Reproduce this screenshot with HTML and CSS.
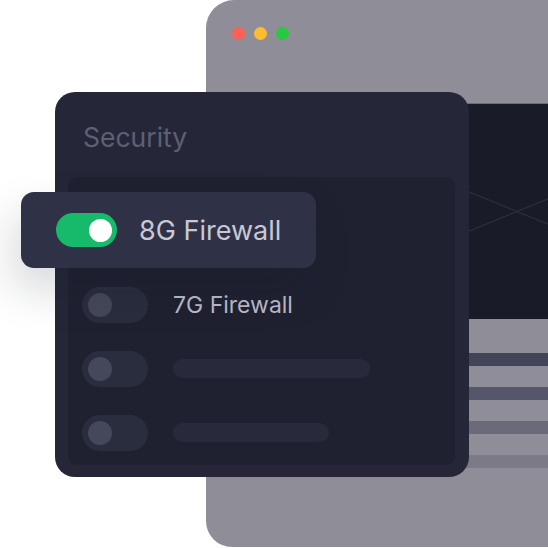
FILE: index.html
```html
<!DOCTYPE html>
<html lang="en">
<head>
<meta charset="utf-8">
<title>Security</title>
<link rel="stylesheet" href="styles.css">
</head>
<body>
<div class="stage">
  <div class="browser">
    <div class="browser-bar">
      <span class="dot dot-red"></span>
      <span class="dot dot-yellow"></span>
      <span class="dot dot-green"></span>
    </div>
    <div class="browser-body">
      <div class="hero">
        <svg class="hero-x" viewBox="0 0 526 216" preserveAspectRatio="none">
          <line x1="0" y1="0" x2="526" y2="216"/>
          <line x1="0" y1="216" x2="526" y2="0"/>
        </svg>
      </div>
      <div class="stripes">
        <div class="stripe stripe-1"></div>
        <div class="stripe stripe-2"></div>
        <div class="stripe stripe-3"></div>
        <div class="stripe stripe-4"></div>
      </div>
    </div>
  </div>

  <div class="panel">
    <h2 class="panel-title">Security</h2>
    <div class="list">
      <div class="row">
        <span class="toggle"><span class="knob"></span></span>
      </div>
      <div class="row">
        <span class="toggle"><span class="knob"></span></span>
        <span class="label">7G Firewall</span>
      </div>
      <div class="row">
        <span class="toggle"><span class="knob"></span></span>
        <span class="bar bar-long"></span>
      </div>
      <div class="row">
        <span class="toggle"><span class="knob"></span></span>
        <span class="bar bar-short"></span>
      </div>
    </div>
  </div>

  <div class="float-card">
    <span class="toggle-on"><span class="knob-on"></span></span>
    <span class="float-label">8G Firewall</span>
  </div>
</div>
</body>
</html>
```

FILE: styles.css
```css
* { box-sizing: border-box; }

html, body {
  margin: 0;
  padding: 0;
  background: #ffffff;
}

body {
  font-family: Inter, "Liberation Sans", sans-serif;
}

.stage {
  position: relative;
  width: 548px;
  height: 548px;
  overflow: hidden;
  background: #ffffff;
}

/* Browser window in the background */
.browser {
  position: absolute;
  left: 206px;
  top: 0;
  width: 622px;
  height: 547px;
  background: #8f8e98;
  border-radius: 28px 0 0 26px;
  display: flex;
  flex-direction: column;
}

.browser-bar {
  height: 103px;
  display: flex;
  align-items: flex-start;
  gap: 9px;
  padding: 27px 0 0 26px;
}

.dot {
  width: 13px;
  height: 13px;
  border-radius: 50%;
}
.dot-red { background: #fe5f57; }
.dot-yellow { background: #febc2e; }
.dot-green { background: #28c840; }

.browser-body {
  padding: 0 48px;
  display: flex;
  flex-direction: column;
}

.hero {
  height: 216px;
  background: #1a1b28;
  border-top: 1px solid #6e6d78;
}

.hero-x {
  display: block;
  width: 100%;
  height: 100%;
}

.hero-x line {
  stroke: #2c2e40;
  stroke-width: 1.2;
}

.stripes {
  margin-top: 34px;
  display: flex;
  flex-direction: column;
  gap: 21.5px;
}

.stripe { height: 12.5px; }
.stripe-1 { background: #434458; }
.stripe-2 { background: #56566a; }
.stripe-3 { background: #6a6a7a; }
.stripe-4 { background: #7b7b88; }

/* Security panel */
.panel {
  position: absolute;
  left: 55px;
  top: 92px;
  width: 414px;
  height: 385px;
  background: #252739;
  border-radius: 20px;
  padding: 32px 14px 14px 13px;
  display: flex;
  flex-direction: column;
}

.panel-title {
  margin: 0 0 26px 15px;
  font-size: 26.5px;
  line-height: 1;
  font-weight: 400;
  color: #5d6073;
}

.list {
  flex: 1;
  background: #1f2131;
  border-radius: 9px;
  padding: 46px 14px 14px 14px;
  display: flex;
  flex-direction: column;
  gap: 28px;
}

.row {
  display: flex;
  align-items: center;
  gap: 25px;
  height: 36px;
}

.toggle {
  width: 66px;
  height: 36px;
  flex: none;
  border-radius: 18px;
  background: #2a2d3e;
  display: flex;
  align-items: center;
  padding-left: 6px;
}

.knob {
  width: 24px;
  height: 24px;
  border-radius: 50%;
  background: #45485a;
}

.label {
  font-size: 23px;
  color: #babbc8;
  white-space: nowrap;
}

.bar {
  height: 19px;
  border-radius: 10px;
  background: #272a3b;
}
.bar-long { width: 197px; }
.bar-short { width: 156px; }

/* Floating highlighted row */
.float-card {
  position: absolute;
  left: 21px;
  top: 192px;
  width: 295px;
  height: 76px;
  background: #2f3246;
  border-radius: 13px;
  box-shadow: -8px 22px 44px rgba(20, 22, 40, 0.16);
  display: flex;
  align-items: center;
  gap: 22px;
  padding-left: 35px;
}

.toggle-on {
  width: 61px;
  height: 34px;
  flex: none;
  border-radius: 17px;
  background: #17b96b;
  display: flex;
  align-items: center;
  justify-content: flex-end;
  padding-right: 5px;
}

.knob-on {
  width: 23px;
  height: 23px;
  border-radius: 50%;
  background: #ffffff;
}

.float-label {
  font-size: 27px;
  color: #c8c9d5;
  white-space: nowrap;
}
```
